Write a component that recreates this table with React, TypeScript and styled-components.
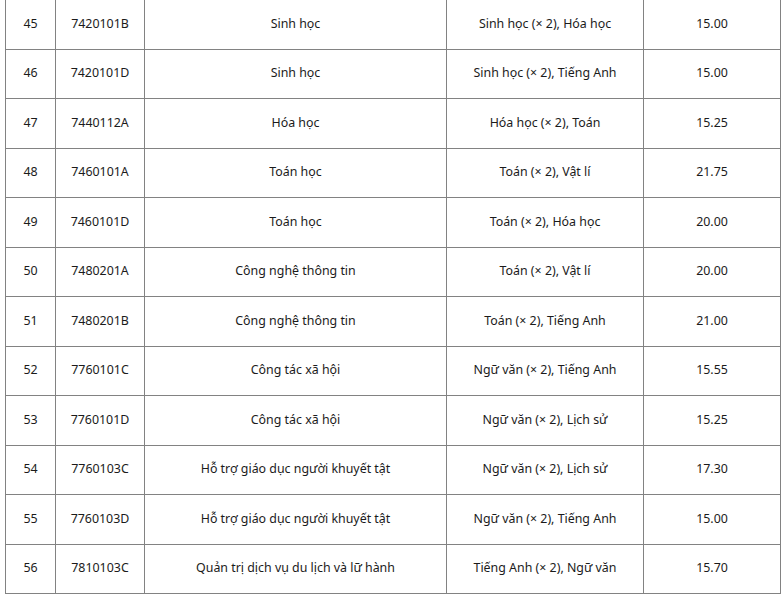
import { createGlobalStyle } from 'styled-components'
import styled from 'styled-components'

const GlobalStyle = createGlobalStyle`
  html, body {
    margin: 0;
    padding: 0;
    background: #fff;
  }
  body {
    font-family: 'Noto Sans', 'Open Sans', sans-serif;
    color: #1b1b1b;
  }
`

const Page = styled.div`
  padding: 0 2px 0 5px;
  margin-top: -1px;
  width: 775px;
`

const Table = styled.table`
  width: 775px;
  border-collapse: collapse;
  table-layout: fixed;
  font-size: 12.4px;
`

const Row = styled.tr`
  height: 49.5px;
`

const Cell = styled.td`
  border: 1px solid #828282;
  padding: 0 6px 1px;
  text-align: center;
  vertical-align: middle;
  line-height: 18px;
  white-space: nowrap;
`

const rows = [
  ['45', '7420101B', 'Sinh học', 'Sinh học (× 2), Hóa học', '15.00'],
  ['46', '7420101D', 'Sinh học', 'Sinh học (× 2), Tiếng Anh', '15.00'],
  ['47', '7440112A', 'Hóa học', 'Hóa học (× 2), Toán', '15.25'],
  ['48', '7460101A', 'Toán học', 'Toán (× 2), Vật lí', '21.75'],
  ['49', '7460101D', 'Toán học', 'Toán (× 2), Hóa học', '20.00'],
  ['50', '7480201A', 'Công nghệ thông tin', 'Toán (× 2), Vật lí', '20.00'],
  ['51', '7480201B', 'Công nghệ thông tin', 'Toán (× 2), Tiếng Anh', '21.00'],
  ['52', '7760101C', 'Công tác xã hội', 'Ngữ văn (× 2), Tiếng Anh', '15.55'],
  ['53', '7760101D', 'Công tác xã hội', 'Ngữ văn (× 2), Lịch sử', '15.25'],
  ['54', '7760103C', 'Hỗ trợ giáo dục người khuyết tật', 'Ngữ văn (× 2), Lịch sử', '17.30'],
  ['55', '7760103D', 'Hỗ trợ giáo dục người khuyết tật', 'Ngữ văn (× 2), Tiếng Anh', '15.00'],
  ['56', '7810103C', 'Quản trị dịch vụ du lịch và lữ hành', 'Tiếng Anh (× 2), Ngữ văn', '15.70'],
]

const widths = [50, 89, 302, 197, 137]

export default function App() {
  return (
    <Page>
      <GlobalStyle />
      <Table>
        <colgroup>
          {widths.map((w, i) => (
            <col key={i} style={{ width: w }} />
          ))}
        </colgroup>
        <tbody>
          {rows.map((r) => (
            <Row key={r[0]}>
              {r.map((c, i) => (
                <Cell key={i}>{c}</Cell>
              ))}
            </Row>
          ))}
        </tbody>
      </Table>
    </Page>
  )
}
